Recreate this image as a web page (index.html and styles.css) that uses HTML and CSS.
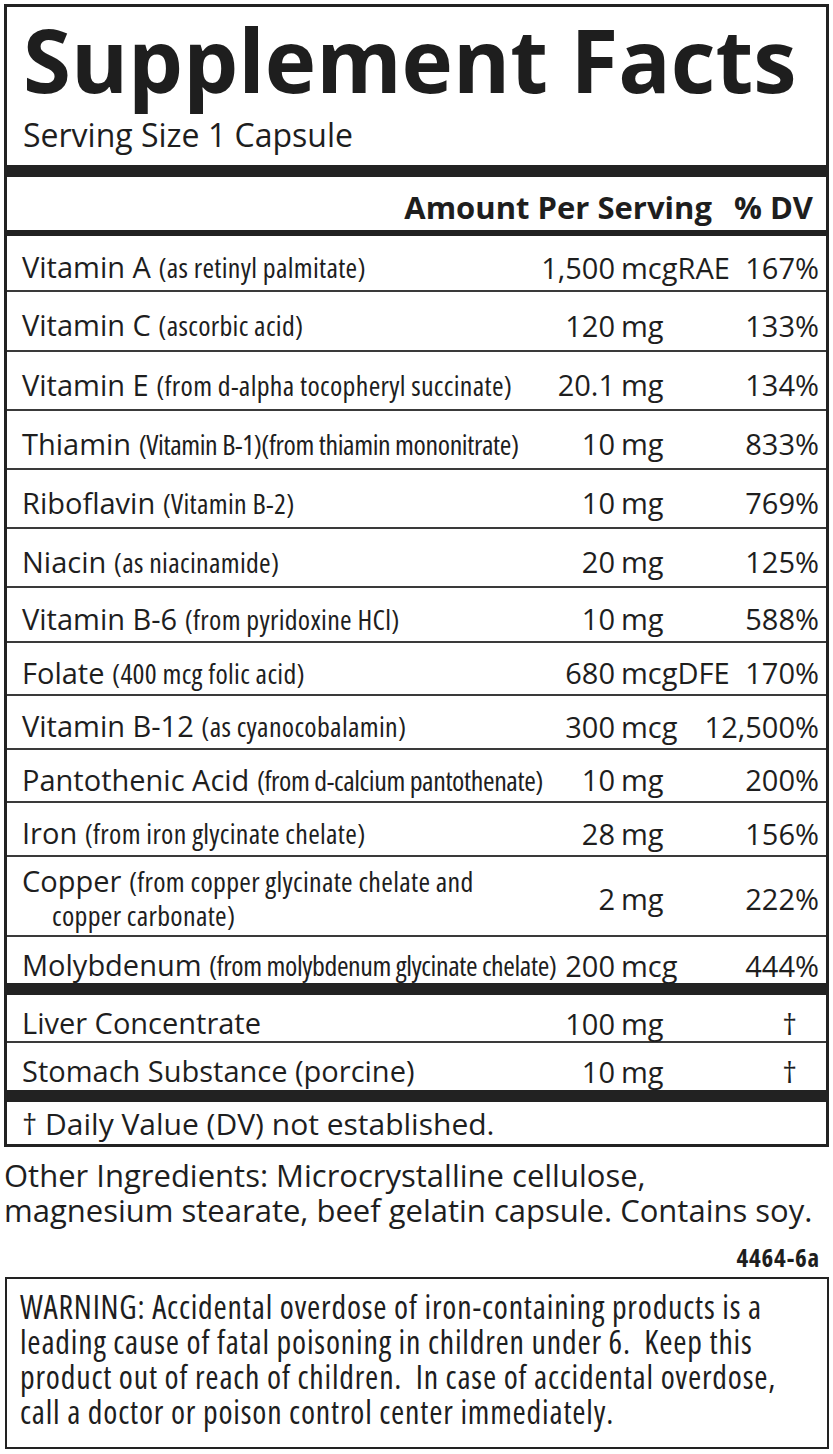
FILE: index.html
```html
<!DOCTYPE html>
<html lang="en">
<head>
<meta charset="utf-8">
<title>Supplement Facts</title>
<link rel="stylesheet" href="styles.css">
</head>
<body>
<div class="page">
  <section class="facts">
    <header class="facts-head">
      <h1 class="title">Supplement Facts</h1>
      <p class="serving">Serving Size 1 Capsule</p>
    </header>
    <div class="bar bar--thick"></div>
    <div class="colhead"><span>Amount Per Serving</span><span>% DV</span></div>
    <div class="bar bar--mid"></div>

    <div class="row h56"><div class="name">Vitamin A <span class="note">(as retinyl palmitate)</span></div><div class="num">1,500</div><div class="unit">mcgRAE</div><div class="dv">167%</div></div>
    <div class="row h60"><div class="name">Vitamin C <span class="note">(ascorbic acid)</span></div><div class="num">120</div><div class="unit">mg</div><div class="dv">133%</div></div>
    <div class="row h59"><div class="name">Vitamin E <span class="note">(from d-alpha tocopheryl succinate)</span></div><div class="num">20.1</div><div class="unit">mg</div><div class="dv">134%</div></div>
    <div class="row h59"><div class="name">Thiamin <span class="note note--tight">(Vitamin B-1)(from thiamin mononitrate)</span></div><div class="num">10</div><div class="unit">mg</div><div class="dv">833%</div></div>
    <div class="row h59"><div class="name">Riboflavin <span class="note">(Vitamin B-2)</span></div><div class="num">10</div><div class="unit">mg</div><div class="dv">769%</div></div>
    <div class="row h59"><div class="name">Niacin <span class="note">(as niacinamide)</span></div><div class="num">20</div><div class="unit">mg</div><div class="dv">125%</div></div>
    <div class="row h55"><div class="name">Vitamin B-6 <span class="note">(from pyridoxine HCl)</span></div><div class="num">10</div><div class="unit">mg</div><div class="dv">588%</div></div>
    <div class="row h53"><div class="name">Folate <span class="note">(400 mcg folic acid)</span></div><div class="num">680</div><div class="unit">mcgDFE</div><div class="dv">170%</div></div>
    <div class="row h54"><div class="name">Vitamin B-12 <span class="note">(as cyanocobalamin)</span></div><div class="num">300</div><div class="unit">mcg</div><div class="dv">12,500%</div></div>
    <div class="row h53"><div class="name">Pantothenic Acid <span class="note note--tight">(from d-calcium pantothenate)</span></div><div class="num">10</div><div class="unit">mg</div><div class="dv">200%</div></div>
    <div class="row h54"><div class="name">Iron <span class="note">(from iron glycinate chelate)</span></div><div class="num">28</div><div class="unit">mg</div><div class="dv">156%</div></div>
    <div class="row h80"><div class="name name--wrap">Copper <span class="note">(from copper glycinate chelate and<br>copper carbonate)</span></div><div class="num">2</div><div class="unit">mg</div><div class="dv">222%</div></div>
    <div class="row h46 row--last"><div class="name">Molybdenum <span class="note note--tight">(from molybdenum glycinate chelate)</span></div><div class="num">200</div><div class="unit">mcg</div><div class="dv">444%</div></div>

    <div class="bar bar--thick"></div>

    <div class="row h48"><div class="name">Liver Concentrate</div><div class="num">100</div><div class="unit">mg</div><div class="dv dv--dagger">†</div></div>
    <div class="row h47 row--last"><div class="name">Stomach Substance (porcine)</div><div class="num">10</div><div class="unit">mg</div><div class="dv dv--dagger">†</div></div>

    <div class="bar bar--thick"></div>

    <p class="footnote">† Daily Value (DV) not established.</p>
  </section>

  <p class="other">
    <span class="line">Other Ingredients: Microcrystalline cellulose,</span>
    <span class="line">magnesium stearate, beef gelatin capsule. Contains soy.</span>
  </p>
  <p class="code">4464-6a</p>

  <section class="warning">
    <span class="line">WARNING: Accidental overdose of iron-containing products is a</span>
    <span class="line">leading cause of fatal poisoning in children under 6.&nbsp; Keep this</span>
    <span class="line">product out of reach of children.&nbsp; In case of accidental overdose,</span>
    <span class="line">call a doctor or poison control center immediately.</span>
  </section>
</div>
</body>
</html>
```

FILE: styles.css
```css
html, body {
  margin: 0;
  padding: 0;
  background: #fff;
}

body {
  color: #1e1e1e;
  font-family: "Open Sans", "Noto Sans", sans-serif;
}

.page {
  width: 833px;
  height: 1454px;
  box-sizing: border-box;
  padding: 4px 4px 0 4px;
}

.facts {
  border: 3px solid #222;
  box-sizing: border-box;
  width: 825px;
}

.facts-head {
  padding: 8px 0 15px 16px;
  height: 158px;
  box-sizing: border-box;
}

.title {
  margin: 0;
  font-size: 87px;
  line-height: 88px;
  font-weight: 700;
  white-space: nowrap;
}

.serving {
  margin: 17px 0 0 0;
  font-size: 32px;
  line-height: 30px;
}

.bar {
  background: #222;
}

.bar--thick {
  height: 12px;
}

.bar--mid {
  height: 6px;
}

.colhead {
  height: 53px;
  box-sizing: border-box;
  display: flex;
  justify-content: flex-end;
  align-items: center;
  gap: 22px;
  padding: 6px 13px 0 0;
  font-weight: 700;
  font-size: 31px;
  white-space: nowrap;
}

.row {
  display: grid;
  grid-template-columns: 518px 75px 84px 120px;
  align-items: center;
  box-sizing: border-box;
  padding: 8px 7px 0 15px;
  border-bottom: 2px solid #3a3a3a;
  font-size: 29px;
  white-space: nowrap;
}

.row--last {
  border-bottom: 0;
}

.h46 { height: 46px; }
.h47 { height: 47px; }
.h48 { height: 48px; }
.h53 { height: 53px; }
.h54 { height: 54px; }
.h55 { height: 55px; }
.h56 { height: 56px; }
.h59 { height: 59px; }
.h60 { height: 60px; }
.h80 { height: 80px; padding-top: 4px; }

.name {
  line-height: 40px;
}

.name--wrap {
  line-height: 33px;
  padding-left: 30px;
  text-indent: -30px;
}

.note {
  font-stretch: 75%;
  font-size: 28px;
  letter-spacing: 0.3px;
}

.note--tight {
  letter-spacing: -0.4px;
}

.num {
  text-align: right;
}

.unit {
  padding-left: 6px;
}

.dv {
  text-align: right;
}

.dv--dagger {
  padding-right: 22px;
}

.footnote {
  margin: 0;
  height: 42px;
  box-sizing: border-box;
  padding: 2px 0 0 15px;
  font-size: 30px;
  line-height: 40px;
  white-space: nowrap;
}

.other {
  margin: 11px 0 0 0;
  font-size: 31px;
  line-height: 35px;
}

.line {
  display: block;
  white-space: nowrap;
}

.code {
  margin: 16px 9px 0 0;
  text-align: right;
  font-stretch: 75%;
  font-weight: 700;
  font-size: 25px;
  letter-spacing: 0.8px;
  line-height: 26px;
}

.warning {
  margin: 7px 0 0 1px;
  border: 2px solid #222;
  height: 172px;
  box-sizing: border-box;
  padding: 10px 0 0 13px;
  font-stretch: 75%;
  font-size: 32px;
  letter-spacing: 0.8px;
  line-height: 35px;
}
```
